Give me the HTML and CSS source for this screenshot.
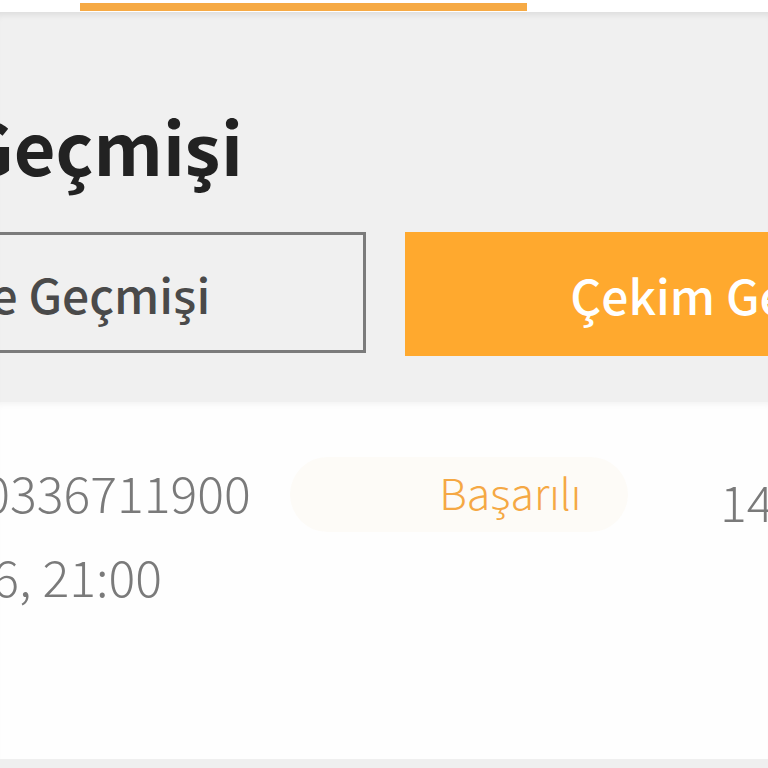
FILE: index.html
```html
<!DOCTYPE html>
<html lang="tr">
<head>
<meta charset="utf-8">
<link rel="stylesheet" href="styles.css">
</head>
<body>
<div class="topbar"><div class="indicator"></div></div>
<section class="panel">
  <h1 class="title">İşlem Geçmişi</h1>
  <div class="tabs">
    <div class="tab tab-outline">Yükleme Geçmişi</div>
    <div class="tab tab-active">Çekim Geçmişi</div>
  </div>
</section>
<section class="list">
  <div class="row">
    <div class="info">
      <div class="order">W2024050336711900</div>
      <div class="date">10.05.2026, 21:00</div>
    </div>
    <div class="badge">Başarılı</div>
    <div class="amount">1400</div>
  </div>
</section>
<div class="bottom"></div>
</body>
</html>
```

FILE: styles.css
```css
html, body {
  margin: 0;
  padding: 0;
}
body {
  width: 768px;
  height: 768px;
  overflow: hidden;
  background: #fefefe;
  font-family: "Noto Sans CJK SC", "Noto Sans", sans-serif;
}
.topbar {
  height: 12px;
  padding-top: 3px;
  box-sizing: border-box;
  background: #fff;
}
.indicator {
  margin-left: 80px;
  width: 447px;
  height: 8px;
  background: #f6aa45;
}
.panel {
  height: 390px;
  background: #f0f0f0;
  box-shadow: inset 0 7px 6px -4px rgba(0, 0, 0, 0.08);
  overflow: hidden;
  box-sizing: border-box;
  padding-top: 97px;
}
.title {
  margin: 0 0 0 -248px;
  font-size: 72px;
  font-weight: 700;
  line-height: 72px;
  color: #222;
  white-space: nowrap;
}
.tabs {
  display: flex;
  gap: 39px;
  align-items: flex-start;
  margin-top: 51px;
}
.tab {
  flex: none;
  display: flex;
  align-items: center;
  justify-content: center;
  font-size: 48px;
  font-weight: 500;
  box-sizing: border-box;
  white-space: nowrap;
}
.tab-outline {
  width: 700px;
  margin-left: -334px;
  height: 121px;
  border: 3px solid #7b7b7b;
  color: #4a4a4a;
}
.tab-active {
  width: 668px;
  height: 124px;
  background: #ffa92e;
  color: #fff;
}
.list {
  height: 357px;
  background: #fefefe;
  box-shadow: inset 0 6px 6px -4px rgba(0, 0, 0, 0.05);
}
.row {
  display: flex;
  align-items: flex-start;
  padding-top: 47px;
}
.info {
  flex: none;
  margin-left: -220px;
  width: 510px;
  color: #7a7a7a;
  font-size: 50px;
  font-weight: 300;
  line-height: 84px;
  white-space: nowrap;
}
.badge {
  flex: none;
  margin-top: 8px;
  width: 338px;
  height: 75px;
  box-sizing: border-box;
  padding: 0 47px 6px 0;
  border-radius: 38px;
  background: #fdfbf7;
  color: #f5a844;
  font-size: 43px;
  font-weight: 300;
  display: flex;
  align-items: center;
  justify-content: flex-end;
}
.amount {
  flex: none;
  margin-left: 92px;
  margin-top: 9px;
  color: #7a7a7a;
  font-size: 50px;
  font-weight: 300;
  line-height: 84px;
  white-space: nowrap;
}
.bottom {
  height: 9px;
  background: #efefef;
}
```
